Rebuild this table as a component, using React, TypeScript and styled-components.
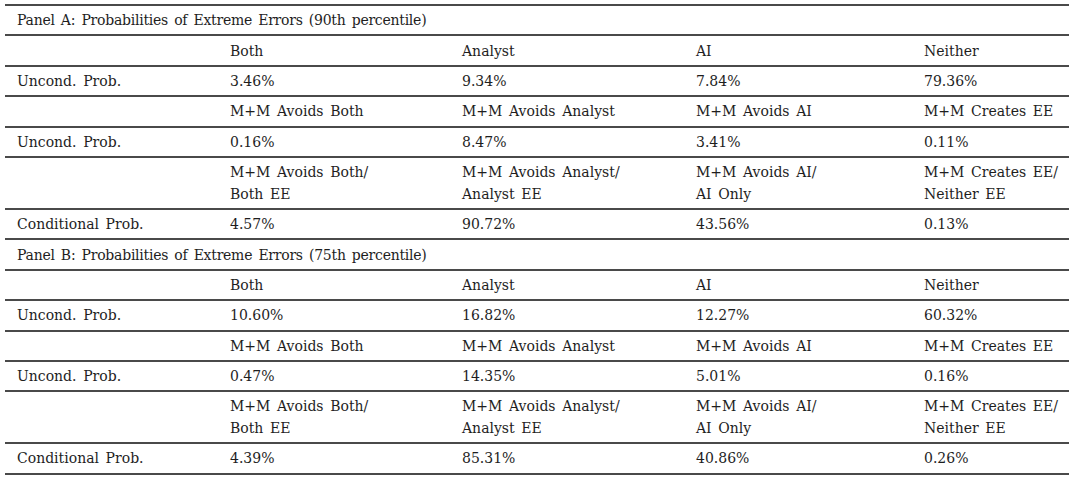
import React from "react";
import styled, { createGlobalStyle } from "styled-components";

const Global = createGlobalStyle`
  html, body { margin: 0; padding: 0; background: #ffffff; }
  body { font-family: "DejaVu Serif", "Liberation Serif", serif; color: #1e1e1e; }
`;

const Page = styled.div`
  width: 1080px;
  height: 482px;
  overflow: hidden;
  padding: 4px 11px 0 5px;
  box-sizing: border-box;
`;

const Table = styled.div`
  width: 1064px;
  border-bottom: 2px solid #4a4a4a;
`;

const PanelTitle = styled.div`
  border-top: 2px solid #4a4a4a;
  height: 28.4px;
  display: flex;
  align-items: center;
  padding-left: 12px;
  font-size: 14px;
  letter-spacing: -0.25px;
  word-spacing: 2px;
`;

const Row = styled.div<{ $tall?: boolean }>`
  display: grid;
  grid-template-columns: 213px 232px 234px 228px 157px;
  border-top: 2px solid #4a4a4a;
  height: ${(p) => (p.$tall ? "50px" : "28.4px")};
  align-items: center;
`;

const Cell = styled.div`
  padding-left: 12px;
  font-size: 14px;
  line-height: 22px;
  word-spacing: 2.2px;
  white-space: nowrap;
`;

type RowData = { label: string; cells: string[][]; tall?: boolean };

const panels: { title: string; rows: RowData[] }[] = [
  {
    title: "Panel A: Probabilities of Extreme Errors (90th percentile)",
    rows: [
      { label: "", cells: [["Both"], ["Analyst"], ["AI"], ["Neither"]] },
      { label: "Uncond. Prob.", cells: [["3.46%"], ["9.34%"], ["7.84%"], ["79.36%"]] },
      { label: "", cells: [["M+M Avoids Both"], ["M+M Avoids Analyst"], ["M+M Avoids AI"], ["M+M Creates EE"]] },
      { label: "Uncond. Prob.", cells: [["0.16%"], ["8.47%"], ["3.41%"], ["0.11%"]] },
      {
        label: "",
        tall: true,
        cells: [
          ["M+M Avoids Both/", "Both EE"],
          ["M+M Avoids Analyst/", "Analyst EE"],
          ["M+M Avoids AI/", "AI Only"],
          ["M+M Creates EE/", "Neither EE"],
        ],
      },
      { label: "Conditional Prob.", cells: [["4.57%"], ["90.72%"], ["43.56%"], ["0.13%"]] },
    ],
  },
  {
    title: "Panel B: Probabilities of Extreme Errors (75th percentile)",
    rows: [
      { label: "", cells: [["Both"], ["Analyst"], ["AI"], ["Neither"]] },
      { label: "Uncond. Prob.", cells: [["10.60%"], ["16.82%"], ["12.27%"], ["60.32%"]] },
      { label: "", cells: [["M+M Avoids Both"], ["M+M Avoids Analyst"], ["M+M Avoids AI"], ["M+M Creates EE"]] },
      { label: "Uncond. Prob.", cells: [["0.47%"], ["14.35%"], ["5.01%"], ["0.16%"]] },
      {
        label: "",
        tall: true,
        cells: [
          ["M+M Avoids Both/", "Both EE"],
          ["M+M Avoids Analyst/", "Analyst EE"],
          ["M+M Avoids AI/", "AI Only"],
          ["M+M Creates EE/", "Neither EE"],
        ],
      },
      { label: "Conditional Prob.", cells: [["4.39%"], ["85.31%"], ["40.86%"], ["0.26%"]] },
    ],
  },
];

export default function App() {
  return (
    <Page>
      <Global />
      <Table>
        {panels.map((panel) => (
          <React.Fragment key={panel.title}>
            <PanelTitle>{panel.title}</PanelTitle>
            {panel.rows.map((row, i) => (
              <Row key={i} $tall={row.tall}>
                <Cell>{row.label}</Cell>
                {row.cells.map((lines, j) => (
                  <Cell key={j}>
                    {lines.map((l, k) => (
                      <div key={k}>{l}</div>
                    ))}
                  </Cell>
                ))}
              </Row>
            ))}
          </React.Fragment>
        ))}
      </Table>
    </Page>
  );
}
